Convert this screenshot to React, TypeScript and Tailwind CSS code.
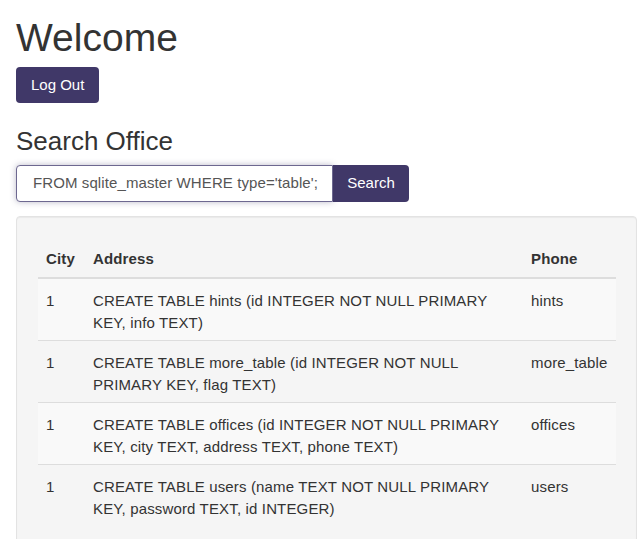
import React from "react";

const rows = [
  { city: "1", address: "CREATE TABLE hints (id INTEGER NOT NULL PRIMARY KEY, info TEXT)", phone: "hints" },
  { city: "1", address: "CREATE TABLE more_table (id INTEGER NOT NULL PRIMARY KEY, flag TEXT)", phone: "more_table" },
  { city: "1", address: "CREATE TABLE offices (id INTEGER NOT NULL PRIMARY KEY, city TEXT, address TEXT, phone TEXT)", phone: "offices" },
  { city: "1", address: "CREATE TABLE users (name TEXT NOT NULL PRIMARY KEY, password TEXT, id INTEGER)", phone: "users" },
];

export default function App() {
  return (
    <div
      className="w-[644px] h-[539px] overflow-hidden bg-white text-[#333] text-[15px] leading-[1.5]"
      style={{ fontFamily: '"Liberation Sans", Arial, Helvetica, sans-serif' }}
    >
      <div className="pl-4 w-[637px]">
        <h1 className="mt-[16px] mb-[8px] text-[39px] leading-[43px] font-normal">Welcome</h1>
        <button className="h-[36px] px-[15px] rounded-[4px] bg-[#403868] text-white text-[15px] leading-[22px]">
          Log Out
        </button>
        <h2 className="mt-[24px] mb-[9px] text-[26px] leading-[28.6px] font-normal">Search Office</h2>
        <div className="flex w-[393px] h-[37px]">
          <div className="w-[317px] h-[37px] rounded-l-[4px] border border-[#6d6890] bg-white shadow-[0_0_6px_rgba(64,56,104,0.35)] overflow-hidden flex items-center pl-[16px] whitespace-nowrap text-[#555] text-[15px] tracking-[0.1px] z-10">
            FROM sqlite_master WHERE type='table';
          </div>
          <button className="w-[76px] h-[37px] rounded-r-[4px] bg-[#403868] text-white text-[15px]">
            Search
          </button>
        </div>
        <div className="mt-[14px] w-[621px] h-[400px] rounded-[4px] border border-[#e3e3e3] bg-[#f5f5f5] pt-[21px] px-[21px] shadow-[inset_0_1px_1px_rgba(0,0,0,0.05)]">
          <table className="w-[578px] table-fixed border-collapse leading-[21.5px] tracking-[0.15px]">
            <colgroup>
              <col className="w-[47px]" />
              <col className="w-[438px]" />
              <col className="w-[93px]" />
            </colgroup>
            <thead>
              <tr>
                <th className="text-left font-bold px-2 pt-[10px] pb-2 border-b-2 border-[#ddd] align-bottom">City</th>
                <th className="text-left font-bold px-2 pt-[10px] pb-2 border-b-2 border-[#ddd] align-bottom">Address</th>
                <th className="text-left font-bold px-2 pt-[10px] pb-2 border-b-2 border-[#ddd] align-bottom">Phone</th>
              </tr>
            </thead>
            <tbody>
              {rows.map((r, i) => (
                <tr key={i} className={i % 2 === 0 ? "bg-[#f9f9f9]" : ""}>
                  <td className="px-2 pt-[11px] pb-[7px] align-top border-t border-[#ddd]">{r.city}</td>
                  <td className="px-2 pt-[11px] pb-[7px] align-top border-t border-[#ddd]">{r.address}</td>
                  <td className="px-2 pt-[11px] pb-[7px] align-top border-t border-[#ddd]">{r.phone}</td>
                </tr>
              ))}
            </tbody>
          </table>
        </div>
      </div>
    </div>
  );
}
